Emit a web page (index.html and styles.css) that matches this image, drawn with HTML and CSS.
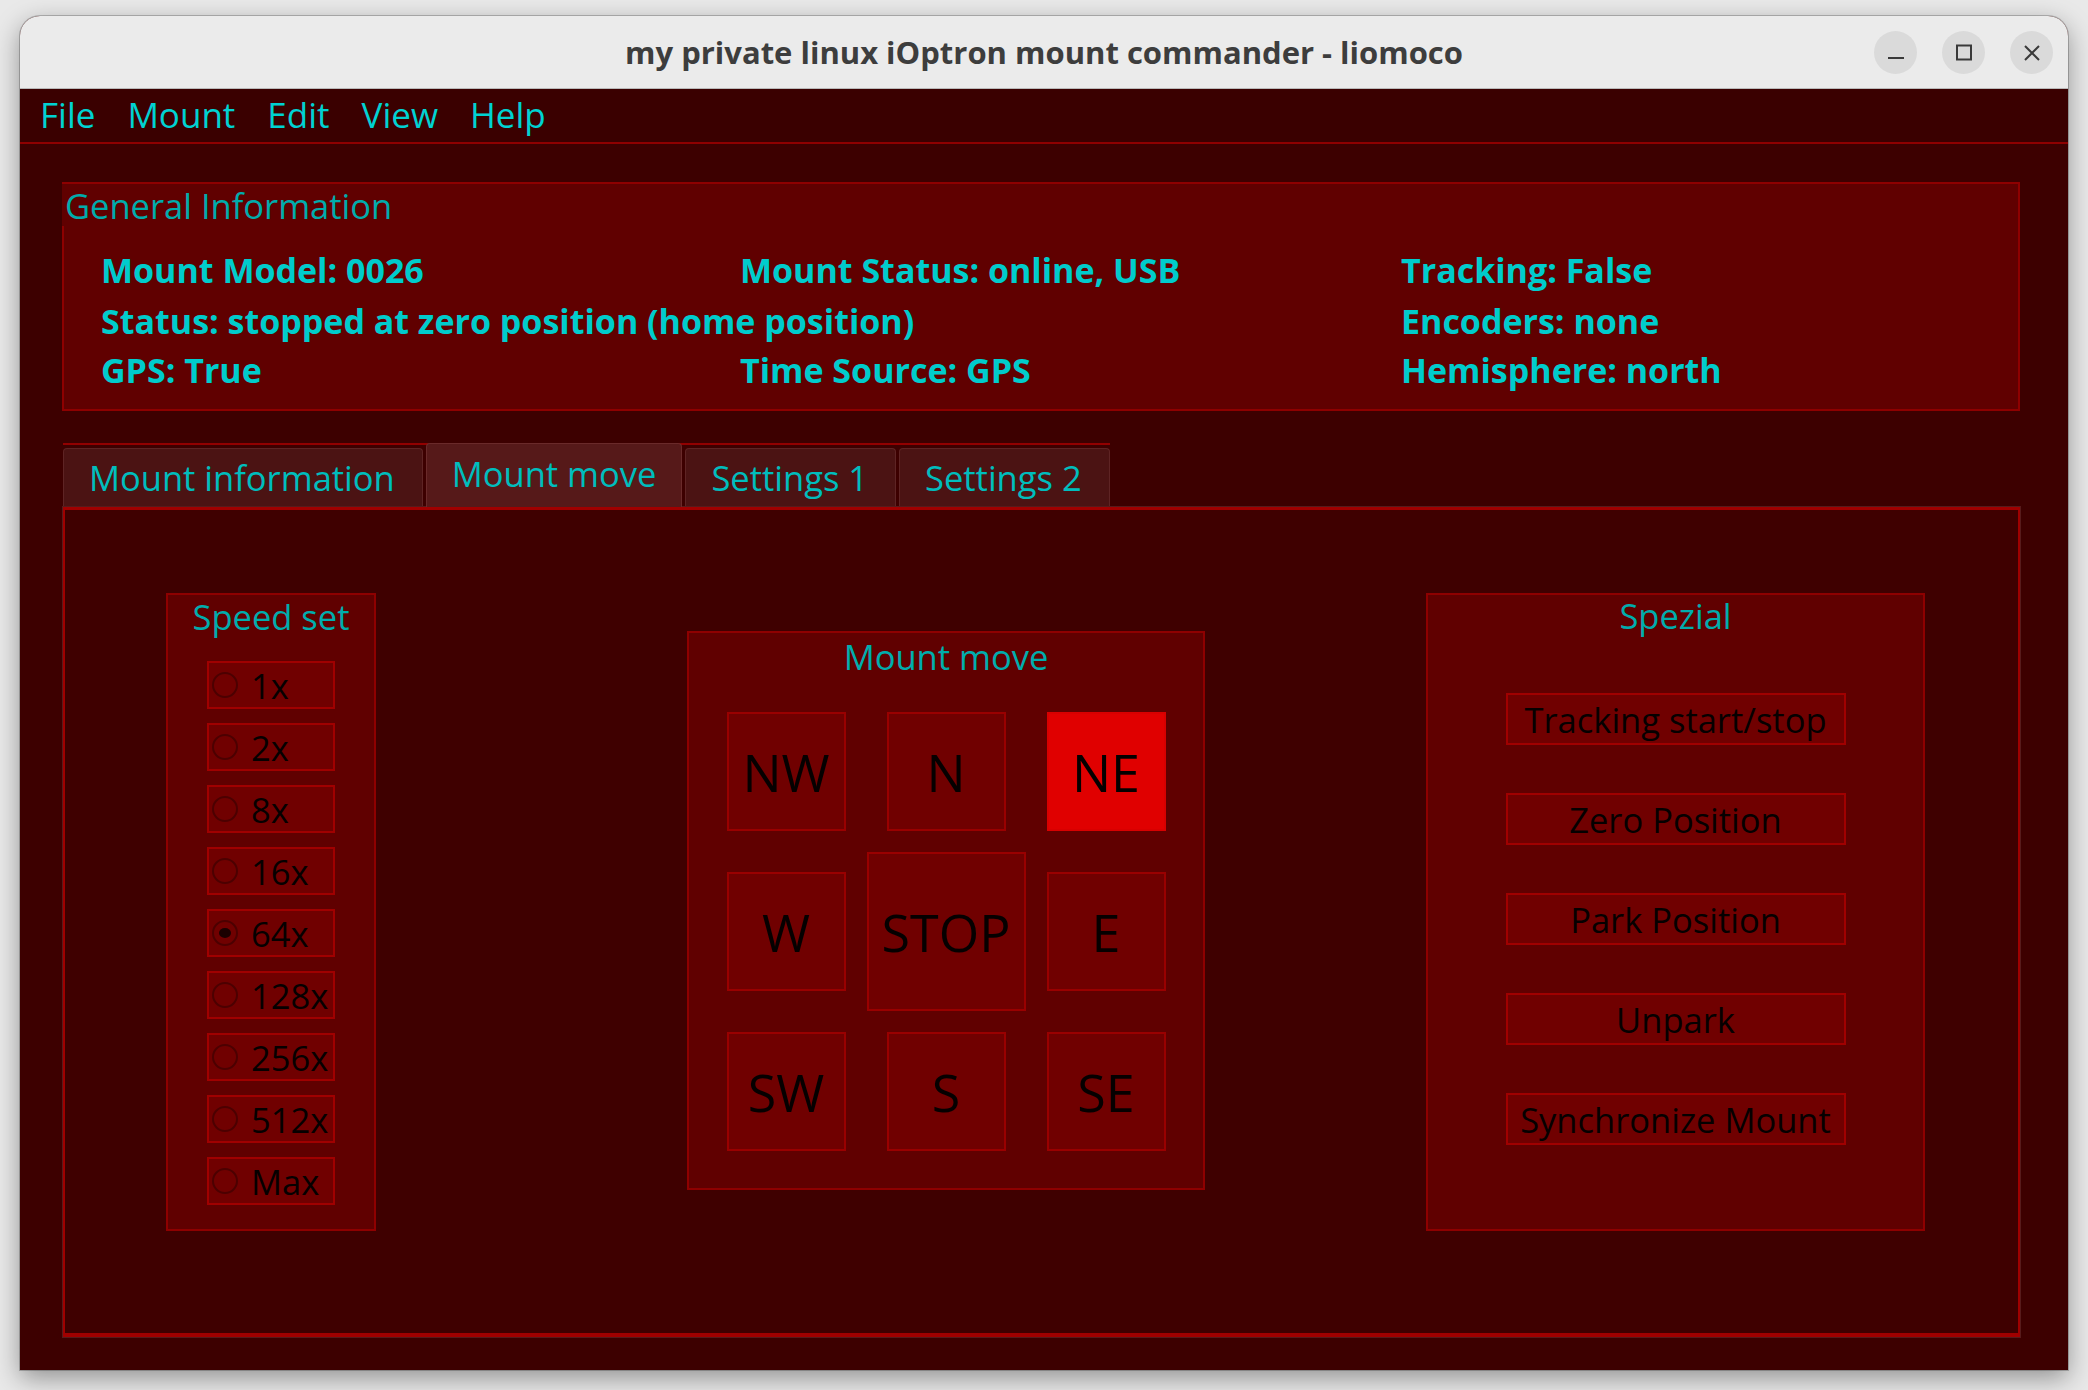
FILE: index.html
```html
<!DOCTYPE html>
<html>
<head>
<meta charset="utf-8">
<title>liomoco</title>
<link rel="stylesheet" href="styles.css">
</head>
<body>
<div class="window">
  <div class="titlebar">
    <div class="tb-spacer"></div>
    <div class="title">my private linux iOptron mount commander - liomoco</div>
    <div class="controls">
      <span class="ctl"><svg width="18" height="18" viewBox="0 0 18 18"><path d="M1 14h16" stroke="#3a3a3a" stroke-width="2.2" fill="none"/></svg></span>
      <span class="ctl"><svg width="18" height="18" viewBox="0 0 18 18"><rect x="2" y="1.5" width="14" height="14" stroke="#3a3a3a" stroke-width="2" fill="none"/></svg></span>
      <span class="ctl"><svg width="18" height="18" viewBox="0 0 18 18"><path d="M2 2L16 16M16 2L2 16" stroke="#3a3a3a" stroke-width="2" fill="none"/></svg></span>
    </div>
  </div>
  <div class="menubar">
    <span class="mi">File</span>
    <span class="mi">Mount</span>
    <span class="mi">Edit</span>
    <span class="mi">View</span>
    <span class="mi">Help</span>
  </div>
  <div class="central">
    <section class="genbox">
      <div class="gtitle">General Information</div>
      <div class="info">
        <div>Mount Model: 0026</div>
        <div>Mount Status: online, USB</div>
        <div>Tracking: False</div>
        <div class="span2">Status: stopped at zero position (home position)</div>
        <div>Encoders: none</div>
        <div>GPS: True</div>
        <div>Time Source: GPS</div>
        <div>Hemisphere: north</div>
      </div>
    </section>

    <div class="tabwidget">
      <div class="tabbar">
        <div class="tab">Mount information</div>
        <div class="tab sel">Mount move</div>
        <div class="tab">Settings 1</div>
        <div class="tab">Settings 2</div>
      </div>
      <div class="pane">
        <div class="group speed">
          <div class="grp-title">Speed set</div>
          <div class="radios">
            <div class="rb"><span class="dot"></span><span>1x</span></div>
            <div class="rb"><span class="dot"></span><span>2x</span></div>
            <div class="rb"><span class="dot"></span><span>8x</span></div>
            <div class="rb"><span class="dot"></span><span>16x</span></div>
            <div class="rb"><span class="dot on"></span><span>64x</span></div>
            <div class="rb"><span class="dot"></span><span>128x</span></div>
            <div class="rb"><span class="dot"></span><span>256x</span></div>
            <div class="rb"><span class="dot"></span><span>512x</span></div>
            <div class="rb"><span class="dot"></span><span>Max</span></div>
          </div>
        </div>

        <div class="group move">
          <div class="grp-title">Mount move</div>
          <div class="dirgrid">
            <div class="dbtn">NW</div>
            <div class="dbtn">N</div>
            <div class="dbtn active">NE</div>
            <div class="dbtn">W</div>
            <div class="dbtn stop">STOP</div>
            <div class="dbtn">E</div>
            <div class="dbtn">SW</div>
            <div class="dbtn">S</div>
            <div class="dbtn">SE</div>
          </div>
        </div>

        <div class="group spezial">
          <div class="grp-title sp-title">Spezial</div>
          <div class="spbtns">
            <div class="sbtn">Tracking start/stop</div>
            <div class="sbtn">Zero Position</div>
            <div class="sbtn">Park Position</div>
            <div class="sbtn">Unpark</div>
            <div class="sbtn">Synchronize Mount</div>
          </div>
        </div>
      </div>
    </div>
  </div>
</div>
</body>
</html>
```
FILE: styles.css
```css
html, body {
  margin: 0;
  padding: 0;
}
body {
  background: #e9e9e9;
  width: 2088px;
  height: 1390px;
  overflow: hidden;
  font-family: "Open Sans", "Noto Sans", sans-serif;
}
.window {
  margin: 16px 0 0 20px;
  width: 2048px;
  height: 1354px;
  border-radius: 20px 20px 0 0;
  overflow: hidden;
  background: #3d0000;
  box-shadow: 0 8px 26px rgba(0, 0, 0, 0.38), 0 0 0 1px rgba(0, 0, 0, 0.22);
}

/* title bar */
.titlebar {
  height: 72px;
  background: #ebebeb;
  border-bottom: 1px solid #b9b9b9;
  display: grid;
  grid-template-columns: 1fr auto 1fr;
  align-items: center;
}
.title {
  font-weight: 700;
  font-size: 31px;
  color: #3d3d3d;
  white-space: nowrap;
}
.controls {
  justify-self: end;
  display: flex;
  gap: 25px;
  margin-right: 15px;
  margin-top: 1px;
}
.ctl {
  width: 43px;
  height: 43px;
  border-radius: 50%;
  background: #dadada;
  display: flex;
  align-items: center;
  justify-content: center;
}

/* menu */
.menubar {
  height: 53px;
  border-bottom: 2px solid #8e0000;
  background: #3a0000;
  display: flex;
  padding-left: 4px;
}
.mi {
  font-size: 35px;
  line-height: 52px;
  color: #00d2d2;
  padding: 0 16px;
}

/* central */
.central {
  padding: 38px 48px 0 42px;
}
.genbox {
  border: 2px solid #8e0000;
  background: #600000;
}
.gtitle {
  position: relative;
  margin-left: -2px;
  padding: 2px 0 0 3px;
  width: max-content;
  background: #600000;
  font-size: 34.5px;
  line-height: 40px;
  color: #00acac;
}
.info {
  margin-top: 17px;
  padding: 0 0 15px 37px;
  display: grid;
  grid-template-columns: 639px 661px 1fr;
  grid-template-rows: 53px 50px 48px;
  font-weight: 700;
  font-size: 34px;
  color: #00cccc;
  white-space: nowrap;
}
.info > div {
  display: flex;
  align-items: center;
}
.span2 {
  grid-column: span 2;
}

/* tabs */
.tabwidget {
  margin-top: 32px;
  margin-left: 1px;
}
.tabbar {
  display: flex;
  align-items: flex-start;
  gap: 3px;
  width: max-content;
  border-top: 2px solid #920000;
  height: 62px;
}
.tab {
  margin-top: 3px;
  height: 57px;
  padding: 0 27px 0 25px;
  background: #4b1313;
  border: 1px solid #5e2424;
  border-bottom: none;
  border-radius: 4px 4px 0 0;
  font-size: 34.5px;
  line-height: 57px;
  color: #00bdbd;
  white-space: nowrap;
}
.tab.sel {
  margin-top: -2px;
  height: 63px;
  line-height: 60px;
  background: #561919;
  border-color: #6a2a2a;
  padding: 0 25px;
  position: relative;
}
.pane {
  box-sizing: border-box;
  width: 1957px;
  height: 830px;
  border-style: solid;
  border-color: #a00000;
  border-width: 3px 2px 4px 2px;
  background: #3f0000;
  box-shadow: 0 0 0 1px rgba(120, 60, 60, 0.45);
  display: flex;
  align-items: flex-start;
  padding: 83px 0 0 101px;
}

/* group boxes */
.group {
  border: 2px solid #8e0000;
  background: #600000;
  box-sizing: border-box;
}
.grp-title {
  text-align: center;
  font-size: 34.5px;
  color: #00adad;
  line-height: 44px;
}

/* speed set */
.speed {
  width: 210px;
  height: 638px;
}
.radios {
  margin-top: 22px;
  display: flex;
  flex-direction: column;
  align-items: center;
  gap: 14px;
}
.rb {
  width: 128px;
  height: 48px;
  box-sizing: border-box;
  border: 2px solid #a00000;
  background: #700000;
  display: flex;
  align-items: center;
  padding-left: 3px;
  font-size: 34.5px;
  color: #050000;
}
.dot {
  width: 26px;
  height: 26px;
  box-sizing: border-box;
  border: 2px solid #4c0000;
  border-radius: 50%;
  margin-right: 13px;
  display: flex;
  align-items: center;
  justify-content: center;
}
.dot.on::after {
  content: "";
  width: 12px;
  height: 10px;
  border-radius: 50%;
  background: #1a0000;
}

/* mount move */
.move {
  width: 518px;
  height: 559px;
  margin-left: 311px;
  margin-top: 38px;
}
.move .grp-title {
  line-height: 48px;
}
.dirgrid {
  margin-top: 31px;
  display: grid;
  grid-template-columns: repeat(3, 119px);
  grid-template-rows: repeat(3, 119px);
  gap: 41px;
  justify-content: center;
}
.dbtn {
  box-sizing: border-box;
  border: 2px solid #990000;
  background: #700000;
  display: flex;
  align-items: center;
  justify-content: center;
  font-size: 52px;
  color: #050000;
}
.dbtn.active {
  background: #e00000;
  border-color: #d80000;
}
.dbtn.stop {
  margin: -20px;
}

/* spezial */
.spezial {
  width: 499px;
  height: 638px;
  margin-left: 221px;
}
.sp-title {
  line-height: 42px;
}
.spbtns {
  margin-top: 56px;
  display: flex;
  flex-direction: column;
  align-items: center;
  gap: 48px;
}
.sbtn {
  width: 340px;
  height: 52px;
  box-sizing: border-box;
  border: 2px solid #a00000;
  background: #700000;
  display: flex;
  align-items: center;
  justify-content: center;
  font-size: 34.5px;
  color: #050000;
  white-space: nowrap;
}
```
